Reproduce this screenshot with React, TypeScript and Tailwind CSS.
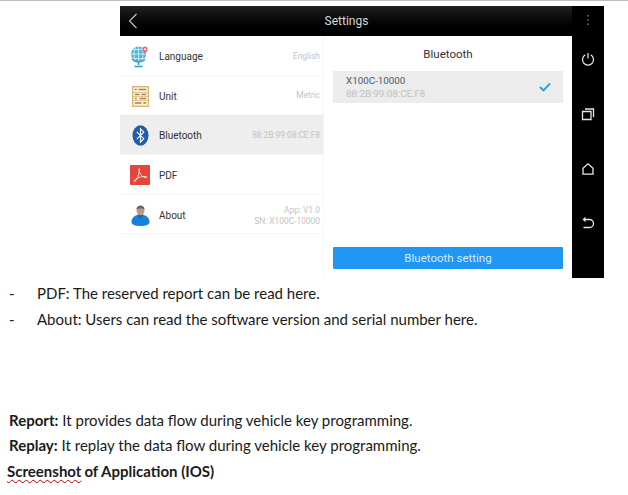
import * as React from "react";

function GlobeIcon() {
  return (
    <svg width="20" height="23" viewBox="0 0 20 23">
      <circle cx="8.5" cy="9" r="7.5" fill="#4fb3e0" />
      <path d="M1 9h15M8.5 1.5v15M3 4.5h11M3 13.5h11M5.5 2.5c-2 4-2 9 0 13M11.5 2.500c2 4 2 9 0 13" stroke="#e6f5fb" strokeWidth="0.8" fill="none" />
      <path d="M2 14c3 3.500 9 4 13 .5" stroke="#2b94c6" strokeWidth="1.2" fill="none" />
      <path d="M8.500 17v3" stroke="#2b94c6" strokeWidth="1.5" />
      <path d="M4.500 21.500h8" stroke="#2ba3cf" strokeWidth="1.600" />
      <path d="M15 9c-2-2.500-2.600-3.600-2.600-4.800a2.600 2.600 0 0 1 5.200 0C17.600 5.400 17 6.500 15 9z" fill="#e0707f" />
      <circle cx="15" cy="4.200" r="1" fill="#fff" />
    </svg>
  );
}

function AbacusIcon() {
  return (
    <svg width="17" height="21" viewBox="0 0 18 21" preserveAspectRatio="none">
      <rect x="0.700" y="0.700" width="16.600" height="19.600" fill="#fbf3dc" stroke="#dcb676" strokeWidth="1.400" />
      <path d="M1 6.500h16M1 10.500h16M1 14.500h16" stroke="#dcb676" strokeWidth="0.800" />
      <path d="M7 3.500h8M3 3.500h2M3 8.500h5M10 8.500h5M3 12.500h2M8 12.500h7M3 17h7M12 17h3" stroke="#9a8560" strokeWidth="1.300" />
    </svg>
  );
}

function BluetoothIcon() {
  return (
    <svg width="17" height="21" viewBox="0 0 17 21">
      <ellipse cx="8.500" cy="10.500" rx="8" ry="10.200" fill="#1f5fa8" />
      <path d="M4.800 6.800l7 7-3.300 3.400V3.800l3.300 3.400-7 7" stroke="#fff" strokeWidth="1.100" fill="none" />
    </svg>
  );
}

function PdfIcon() {
  return (
    <svg width="20" height="20" viewBox="0 0 20 20">
      <rect width="20" height="20" rx="1" fill="#e4463b" />
      <path d="M9.500 3.500c-.8 0-.6 2.200.4 4.500 1 2.300 2.600 4 5 4.600 1.400.3 2.200-.2 1.900-.7-.5-.8-4.500-.6-7.500.4-2.600.9-5 2.800-5.200 3.900-.1.800 1.200.3 2.500-1.600 1.500-2.200 3.700-10.700 2.400-10.700z" stroke="#fbdcd8" strokeWidth="1" fill="none" />
    </svg>
  );
}

function PersonIcon() {
  return (
    <svg width="19" height="21" viewBox="0 0 19 21">
      <path d="M0.500 17c0-4 3-6.500 6-7l3 2 3-2c3 .5 6 3 6 7 0 2.800-3.500 4-9 4s-9-1.200-9-4z" fill="#1681dd" />
      <path d="M6.500 10l3 3.500 3-3.500-1-1.500h-4z" fill="#2a5c8c" />
      <ellipse cx="9.500" cy="5.500" rx="4" ry="4.800" fill="#b99a86" />
      <path d="M5.400 4.500C5.700 1.500 7.500.5 9.500.5s3.800 1 4.100 4c-1.500-1.200-6.700-1.200-8.200 0z" fill="#6b6560" />
    </svg>
  );
}

const rows = [
  { label: "Language", icon: <GlobeIcon />, value: ["English"] },
  { label: "Unit", icon: <AbacusIcon />, value: ["Metric"] },
  { label: "Bluetooth", icon: <BluetoothIcon />, value: ["88:2B:99:08:CE:F8"], active: true },
  { label: "PDF", icon: <PdfIcon />, value: [] },
  { label: "About", icon: <PersonIcon />, value: ["App: V1.0", "SN: X100C-10000"] },
];

function SettingsPanel() {
  return (
    <div className="flex h-[272px] w-[484px] font-['Roboto',sans-serif]">
      <div className="flex w-[452px] flex-col">
        <div className="relative flex h-[30px] items-center justify-center bg-gradient-to-b from-[#222222] to-black">
          <svg className="absolute left-[8px] top-[7px]" width="10" height="16" viewBox="0 0 10 16">
            <path d="M8.500 1L1.500 8l7 7" stroke="#c8c8c8" strokeWidth="1.100" fill="none" />
          </svg>
          <span className="pl-[1px] text-[12px] text-[#d8d8d8]">Settings</span>
        </div>
        <div className="flex flex-1 bg-white">
          <div className="w-[204px] border-r border-[#f5f5f5]">
            {rows.map((row) => (
              <div
                key={row.label}
                className={`flex h-[39.7px] items-center border-b border-[#f7f7f7] pl-[10px] pr-[3px] pt-[2px] ${row.active ? "bg-[#eeeeee]" : "bg-white"}`}
              >
                <div className="flex w-[20px] justify-center">{row.icon}</div>
                <span className="ml-[9px] text-[10px] text-[#333333]">{row.label}</span>
                <div className={`ml-auto text-right text-[8.400px] leading-[11.500px] text-[#c4c4c4] ${row.value.length > 1 ? "mt-[2px]" : ""}`}>
                  {row.value.map((line) => (
                    <div key={line}>{line}</div>
                  ))}
                </div>
              </div>
            ))}
          </div>
          <div className="flex flex-1 flex-col px-[9px] pb-[9px]">
            <div className="mt-[11px] text-center text-[11.500px] leading-[14px] text-[#333333]">Bluetooth</div>
            <div className="mt-[10px] flex h-[32px] items-center justify-between bg-[#ececec] pl-[13px] pr-[12px]">
              <div className="text-[9.800px] leading-[13px]">
                <div className="text-[#4a5a70]">X100C-10000</div>
                <div className="text-[#c0c0c0]">88:2B:99:08:CE:F8</div>
              </div>
              <svg width="12" height="10" viewBox="0 0 12 10">
                <path d="M1 5l3.500 3.500L11 1.500" stroke="#2f9ce0" strokeWidth="1.900" fill="none" />
              </svg>
            </div>
            <div className="mt-auto flex h-[22px] items-center justify-center rounded-[1px] bg-[#2196f3] pt-[2px] text-[11.500px] text-[#d4ecff]">
              Bluetooth setting
            </div>
          </div>
        </div>
      </div>
      <div className="flex w-[32px] flex-col items-center bg-black">
        <svg className="mt-[8px]" width="4" height="12" viewBox="0 0 4 12">
          <path d="M2 1v1.500M2 5.200v1.500M2 9.500v1.500" stroke="#a0a0a0" strokeWidth="1.200" />
        </svg>
        <svg className="mt-[26px]" width="14" height="14" viewBox="0 0 14 14">
          <path d="M4.300 2.800a5.500 5.500 0 1 0 5.400 0M7 1v5.500" stroke="#e8e8e8" strokeWidth="1.200" fill="none" />
        </svg>
        <svg className="mt-[41px]" width="14" height="14" viewBox="0 0 14 14">
          <path d="M1.500 4.500h8.500v8H1.500zM4 2h8.500v8" stroke="#e8e8e8" strokeWidth="1.300" fill="none" />
        </svg>
        <svg className="mt-[41px]" width="14" height="14" viewBox="0 0 14 14">
          <path d="M2 6.200L7 1.800l5 4.400v6H2z" stroke="#e8e8e8" strokeWidth="1.300" fill="none" />
        </svg>
        <svg className="mt-[40px]" width="14" height="14" viewBox="0 0 14 14">
          <path d="M3 3.500h5.500a4 4 0 0 1 0 8H2.500" stroke="#e8e8e8" strokeWidth="1.300" fill="none" />
          <path d="M4.500 0.800L1.500 3.500l3 2.700z" fill="#e8e8e8" />
        </svg>
      </div>
    </div>
  );
}

export default function App() {
  return (
    <div className="h-[495px] w-[628px] overflow-hidden bg-white font-['Lato',sans-serif] text-[15px] text-[#1a1a1a]">
      <div className="h-px bg-[#bdbdbd]" />
      <div className="ml-[120px] mt-[5px]">
        <SettingsPanel />
      </div>
      <div className="mt-[2px] pl-[9px]">
        <div className="flex h-[26px] items-center"><span className="w-[28px]">-</span>PDF: The reserved report can be read here.</div>
        <div className="flex h-[26px] items-center"><span className="w-[28px]">-</span>About: Users can read the software version and serial number here.</div>
      </div>
      <div className="mt-[76px] pl-[9px]">
        <div className="flex h-[25px] items-center"><b className="mr-[4px]">Report:</b>It provides data flow during vehicle key programming.</div>
        <div className="flex h-[25px] items-center"><b className="mr-[4px]">Replay:</b>It replay the data flow during vehicle key programming.</div>
        <div className="-ml-[2px] flex h-[27px] items-center font-bold">
          <span className="underline decoration-wavy decoration-[#c00000] decoration-1 underline-offset-2">Screenshot</span>
          <span className="ml-[3px]">of Application (IOS)</span>
        </div>
      </div>
    </div>
  );
}
